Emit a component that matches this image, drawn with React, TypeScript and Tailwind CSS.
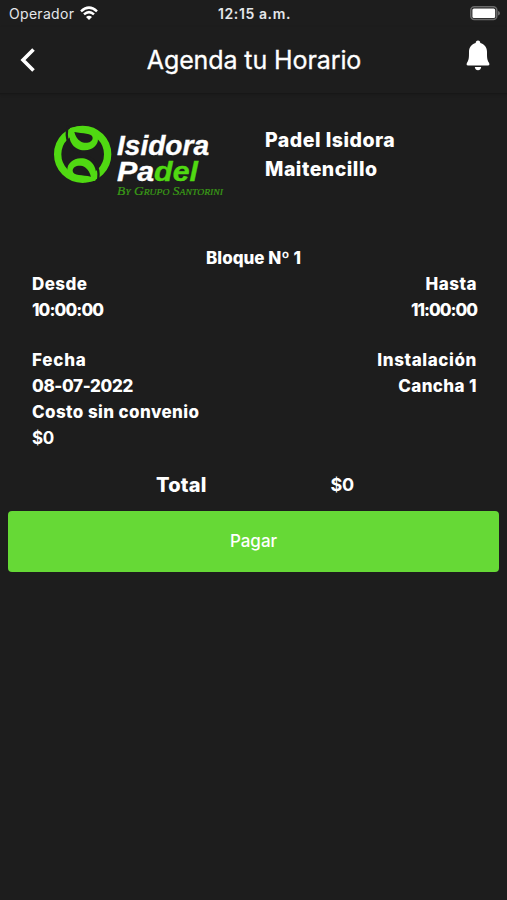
function StatusBar() {
  return (
    <div className="grid h-[27px] grid-cols-3 items-center pl-[9px] pr-[7px] text-[14px] text-gray-200">
      <div className="flex items-center gap-1.5">
        <span className="tracking-[0.3px]">Operador</span>
        <svg viewBox="0 0 18 14" className="-mt-[2px] h-[14px] w-[18px]" fill="none" stroke="#fff" strokeWidth="2.5">
          <path d="M1 5.3 Q9 -2 17 5.3" />
          <path d="M4 8.4 Q9 3.9 14 8.4" />
          <path d="M9 14 L6 11 Q9 8.6 12 11 Z" fill="#fff" stroke="none" />
        </svg>
      </div>
      <span className="text-center font-semibold tracking-[0.6px]">12:15 a.m.</span>
      <svg viewBox="0 0 30 15" className="h-[15px] w-[30px] justify-self-end">
        <rect x="0.8" y="0.8" width="26" height="12.8" rx="3.5" fill="none" stroke="#6b6b6b" strokeWidth="1.5" />
        <rect x="2.4" y="2.4" width="22.8" height="9.6" rx="1.5" fill="#fff" />
        <path d="M28 5 Q30 5.5 30 7.2 Q30 9 28 9.5 Z" fill="#6b6b6b" />
      </svg>
    </div>
  );
}

function BallHalf() {
  return (
    <g>
      <path d="M60 18 C50 62 76 86 104 85 C128 84 145 68 144 50 C140 34 115 20 90 13 Z" fill="#50d912" />
      <path d="M73 30 C98 36 127 32 128 47 C128 62 106 67 91 58 C81 51 76 41 73 30 Z" fill="#1d1d1d" />
      <path d="M54 10 C43 50 58 82 88 92" fill="none" stroke="#1d1d1d" strokeWidth="7" />
    </g>
  );
}

function Logo() {
  return (
    <svg viewBox="50 122 176 78" className="h-[78px] w-[176px]">
      <g transform="translate(50 122) scale(0.3333)">
        <circle cx="98" cy="97" r="75" fill="none" stroke="#50d912" strokeWidth="22" />
        <BallHalf />
        <g transform="rotate(180 98 97)">
          <BallHalf />
        </g>
      </g>
      <g className="font-['Liberation_Sans',sans-serif] text-[28.5px] font-bold italic" fill="#fff" stroke="#fff" strokeWidth="0.4">
        <text x="117" y="154.8" textLength="92" lengthAdjust="spacingAndGlyphs">
          Isidora
        </text>
        <text x="117" y="181" textLength="81" lengthAdjust="spacingAndGlyphs">
          Pa<tspan fill="#50d912" stroke="#50d912">del</tspan>
        </text>
      </g>
      <text
        x="117"
        y="195"
        textLength="106"
        lengthAdjust="spacingAndGlyphs"
        className="font-['Liberation_Serif',serif] text-[12.5px] italic [font-variant:small-caps]"
        fill="#3a9c16"
        stroke="#3a9c16"
        strokeWidth="0.2"
      >
        By Grupo Santorini
      </text>
    </svg>
  );
}

export default function App() {
  return (
    <main className="flex h-[900px] w-full flex-col bg-[#1d1d1d] font-['Inter',sans-serif] text-white">
      <StatusBar />

      {/* Header */}
      <header className="flex h-[67px] items-center justify-between border-b border-[#171717] pl-[20px] pr-[17px] shadow-sm">
        <svg viewBox="0 0 16 24" className="-mt-px h-6 w-4" fill="none" stroke="#fff" strokeWidth="3.6">
          <path d="M13.5 1.5 L3 12 L13.5 22.5" />
        </svg>
        <h1 className="pl-[6px] text-[25px] leading-none tracking-[-0.1px] [-webkit-text-stroke:0.3px_#fff]">Agenda tu Horario</h1>
        <svg viewBox="0 0 24 31" className="-mt-[10px] h-[31px] w-6" fill="#fff">
          <path d="M12 0.5 C13.5 0.5 14.3 1.5 14.3 3 C18.6 4.2 21 7.6 21 11.8 C21 17.5 21 20 23 22.7 Q24.3 25.5 21.8 25.5 H2.2 Q-0.3 25.5 1 22.7 C3 20 3 17.5 3 11.8 C3 7.6 5.4 4.2 9.7 3 C9.7 1.5 10.5 0.5 12 0.5 Z" />
          <path d="M8.8 27 H15.2 Q14.6 30.3 12 30.3 Q9.4 30.3 8.8 27 Z" />
        </svg>
      </header>

      {/* Club */}
      <section className="mt-7 flex h-[78px] gap-[39px] pl-[50px]">
        <Logo />
        <div className="pt-1 text-[19.5px] font-extrabold leading-[29px] tracking-[0.5px]">
          <p>Padel Isidora</p>
          <p>Maitencillo</p>
        </div>
      </section>

      {/* Booking details */}
      <section className="mt-[46px] px-8 text-[17px] font-extrabold leading-[25.8px]">
        <p className="text-center">Bloque Nº 1</p>
        <div className="flex justify-between">
          <div>
            <p className="tracking-[0.4px]">Desde</p>
            <p className="tracking-[-0.9px]">10:00:00</p>
          </div>
          <div className="-mr-[2px] text-right">
            <p className="tracking-[0.5px]">Hasta</p>
            <p className="tracking-[-1px]">11:00:00</p>
          </div>
        </div>
        <div className="mt-[25px] flex justify-between">
          <div>
            <p className="tracking-[0.8px]">Fecha</p>
            <p className="tracking-[-0.35px]">08-07-2022</p>
            <p className="tracking-[0.4px]">Costo sin convenio</p>
            <p className="font-bold tracking-[-0.5px]">$0</p>
          </div>
          <div className="-mr-[2px] text-right">
            <p className="tracking-[0.6px]">Instalación</p>
            <p className="tracking-[0.4px]">Cancha 1</p>
          </div>
        </div>
      </section>

      {/* Total */}
      <div className="mt-[17px] flex items-center gap-[124px] pl-[156px] leading-8">
        <span className="text-[20px] font-extrabold tracking-[0.2px]">Total</span>
        <span className="text-[18px] font-bold tracking-[-0.4px]">$0</span>
      </div>

      <button className="mx-2 mt-[10px] h-[61px] shrink-0 rounded bg-[#66d936] pt-px text-[17px] font-medium">Pagar</button>
    </main>
  );
}
